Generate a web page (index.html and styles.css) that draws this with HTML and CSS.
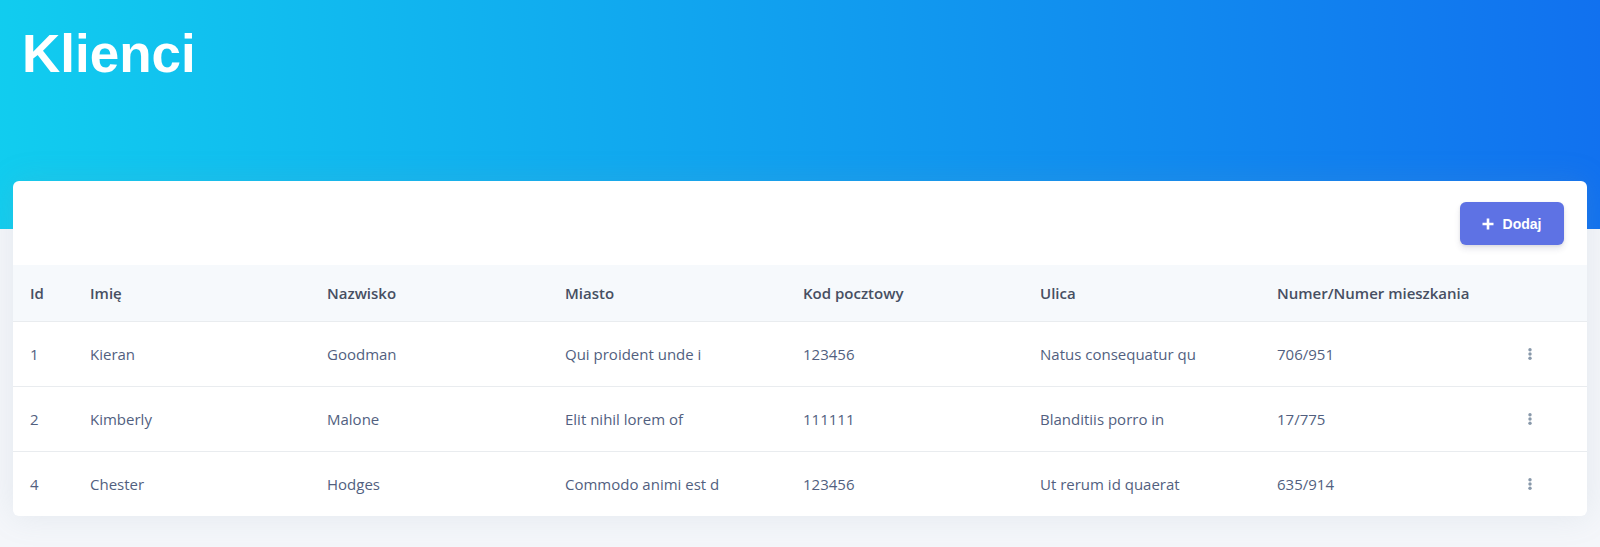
FILE: index.html
```html
<!DOCTYPE html>
<html lang="pl">
<head>
<meta charset="utf-8">
<title>Klienci</title>
<link rel="stylesheet" href="styles.css">
</head>
<body>
<header class="hero">
  <h1 class="hero-title">Klienci</h1>
</header>
<main class="content">
  <section class="card">
    <div class="card-header">
      <button class="btn-add" type="button">
        <svg class="btn-icon" viewBox="0 0 12 12" width="12" height="12" aria-hidden="true"><path d="M6 0.5V11.5M0.5 6H11.5" stroke="#fff" stroke-width="2.6" stroke-linecap="butt"/></svg>
        <span>Dodaj</span>
      </button>
    </div>
    <table class="table">
      <colgroup>
        <col class="c-id"><col class="c-w"><col class="c-w2"><col class="c-w2"><col class="c-w"><col class="c-w"><col class="c-w"><col class="c-act">
      </colgroup>
      <thead>
        <tr>
          <th>Id</th><th>Imię</th><th>Nazwisko</th><th>Miasto</th><th>Kod pocztowy</th><th>Ulica</th><th>Numer/Numer mieszkania</th><th></th>
        </tr>
      </thead>
      <tbody>
        <tr>
          <td>1</td><td>Kieran</td><td>Goodman</td><td>Qui proident unde i</td><td>123456</td><td>Natus consequatur qu</td><td>706/951</td>
          <td class="act"><svg class="dots" viewBox="0 0 4 12" width="4" height="12" aria-hidden="true"><circle cx="2" cy="1.8" r="1.7"/><circle cx="2" cy="6" r="1.7"/><circle cx="2" cy="10.2" r="1.7"/></svg></td>
        </tr>
        <tr>
          <td>2</td><td>Kimberly</td><td>Malone</td><td>Elit nihil lorem of</td><td>111111</td><td>Blanditiis porro in</td><td>17/775</td>
          <td class="act"><svg class="dots" viewBox="0 0 4 12" width="4" height="12" aria-hidden="true"><circle cx="2" cy="1.8" r="1.7"/><circle cx="2" cy="6" r="1.7"/><circle cx="2" cy="10.2" r="1.7"/></svg></td>
        </tr>
        <tr>
          <td>4</td><td>Chester</td><td>Hodges</td><td>Commodo animi est d</td><td>123456</td><td>Ut rerum id quaerat</td><td>635/914</td>
          <td class="act"><svg class="dots" viewBox="0 0 4 12" width="4" height="12" aria-hidden="true"><circle cx="2" cy="1.8" r="1.7"/><circle cx="2" cy="6" r="1.7"/><circle cx="2" cy="10.2" r="1.7"/></svg></td>
        </tr>
      </tbody>
    </table>
  </section>
</main>
</body>
</html>
```
FILE: styles.css
```css
* { box-sizing: border-box; }
html, body { margin: 0; padding: 0; }
body {
  background: #f4f6fa;
  font-family: "Open Sans", "Liberation Sans", sans-serif;
  color: #525f7f;
  min-height: 547px;
}
.hero {
  height: 229px;
  background: linear-gradient(87deg, #11cdef 0, #1171ef 100%);
  padding: 22px 22px 0;
}
.hero-title {
  margin: 0;
  font-family: "Liberation Sans", Arial, sans-serif;
  font-weight: 700;
  font-size: 53px;
  line-height: 1.2;
  color: #fff;
}
.content {
  padding: 0 13px;
  margin-top: -48px;
}
.card {
  background: #fff;
  border-radius: 6px;
  box-shadow: 0 0 2rem 0 rgba(136, 152, 170, .15);
  overflow: hidden;
}
.card-header {
  height: 84px;
  padding: 21px 23px 0;
  display: flex;
  justify-content: flex-end;
  align-items: flex-start;
}
.btn-add {
  width: 104px;
  height: 43px;
  border: 0;
  border-radius: 6px;
  background: #5e72e4;
  color: #fff;
  font-family: "Liberation Sans", Arial, sans-serif;
  font-weight: 700;
  font-size: 14px;
  display: flex;
  align-items: center;
  justify-content: center;
  gap: 9px;
  padding: 0 1px 0 0;
  box-shadow: 0 4px 6px rgba(50, 50, 93, .11), 0 1px 3px rgba(0, 0, 0, .08);
}
.btn-icon { display: block; }
.table {
  width: 100%;
  border-collapse: collapse;
  table-layout: fixed;
  font-size: 15px;
}
.c-id { width: 60px; }
.c-w { width: 237px; }
.c-w2 { width: 238px; }
.c-act { width: 90px; }
.table th, .table td {
  text-align: left;
  padding: 0 0 0 17px;
  white-space: nowrap;
  overflow: hidden;
}
.table thead th {
  height: 56px;
  background: #f6f9fc;
  border-bottom: 1px solid #e9ecef;
  font-weight: 600;
  color: #474f62;
}
.table tbody td {
  height: 65px;
  border-top: 1px solid #e9ecef;
  color: #525f7f;
}
.table tbody tr:first-child td { border-top: 0; }
.table td.act { padding-left: 31px; }
.dots { display: block; fill: #8898aa; }
```
